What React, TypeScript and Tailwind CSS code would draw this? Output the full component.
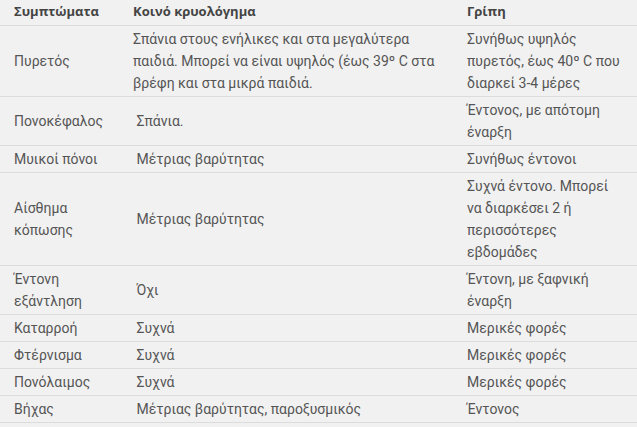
const ROWS: [string, string, string][] = [
  [
    'Πυρετός',
    'Σπάνια στους ενήλικες και στα μεγαλύτερα παιδιά. Μπορεί να είναι υψηλός (έως 39º C στα βρέφη και στα μικρά παιδιά.',
    'Συνήθως υψηλός πυρετός, έως 40º C που διαρκεί 3-4 μέρες',
  ],
  ['Πονοκέφαλος', '\u00a0Σπάνια.', 'Έντονος, με απότομη έναρξη'],
  ['Μυικοί πόνοι', '\u00a0Μέτριας βαρύτητας', 'Συνήθως έντονοι'],
  [
    'Αίσθημα κόπωσης',
    '\u00a0Μέτριας βαρύτητας',
    'Συχνά έντονο. Μπορεί να διαρκέσει 2 ή περισσότερες εβδομάδες',
  ],
  ['Έντονη εξάντληση', '\u00a0Όχι', 'Έντονη, με ξαφνική έναρξη'],
  ['Καταρροή', '\u00a0Συχνά', 'Μερικές φορές'],
  ['Φτέρνισμα', '\u00a0Συχνά', 'Μερικές φορές'],
  ['Πονόλαιμος', '\u00a0Συχνά', 'Μερικές φορές'],
  ['Βήχας', '\u00a0Μέτριας βαρύτητας, παροξυσμικός', 'Έντονος'],
];

export default function App() {
  return (
    <div className="w-[637px] h-[427px] bg-[#f1f1f1] overflow-hidden">
      <table className="w-full table-fixed border-collapse font-['Roboto',sans-serif] text-[14px] leading-[22px] text-[#555]">
        <colgroup>
          <col className="w-[120px]" />
          <col className="w-[336px]" />
          <col />
        </colgroup>
        <thead>
          <tr className="border-b border-[#dcdcdc]">
            <th className="pl-[14px] pr-[6px] pt-0 pb-[3px] text-left font-['Open_Sans',sans-serif] text-[13px] font-bold text-[#444]">
              Συμπτώματα
            </th>
            <th className="pl-[13px] pr-[6px] pt-0 pb-[3px] text-left font-['Open_Sans',sans-serif] text-[13px] font-bold text-[#444]">
              Κοινό κρυολόγημα
            </th>
            <th className="pl-[11px] pr-[12px] pt-0 pb-[3px] text-left font-['Open_Sans',sans-serif] text-[13px] font-bold text-[#444]">
              Γρίπη
            </th>
          </tr>
        </thead>
        <tbody>
          {ROWS.map(([symptom, cold, flu]) => (
            <tr key={symptom} className="border-b border-[#dcdcdc]">
              <td className="pl-[14px] pr-[6px] py-[2px] align-middle">{symptom}</td>
              <td className="pl-[13px] pr-[6px] py-[2px] align-middle">{cold}</td>
              <td className="pl-[11px] pr-[12px] py-[2px] align-middle">{flu}</td>
            </tr>
          ))}
        </tbody>
      </table>
    </div>
  );
}
